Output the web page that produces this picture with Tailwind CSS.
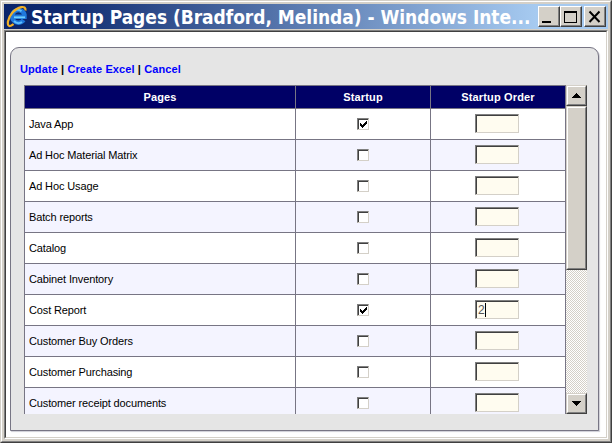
<!DOCTYPE html>
<html lang="en">
<head>
<meta charset="utf-8">
<title>Startup Pages (Bradford, Melinda)</title>
<script src="https://cdn.jsdelivr.net/npm/@tailwindcss/browser@4"></script>
</head>
<body class="w-[612px] h-[443px] overflow-hidden bg-[#d4d0c8] font-['Liberation_Sans',Arial,sans-serif] text-[11px] text-black">
<div class="w-[612px] h-[443px] border-l border-t border-[#d4d0c8] border-r border-b border-r-[#404040] border-b-[#404040]">
<div class="w-full h-full border border-white border-r-[#808080] border-b-[#808080] p-[2px] flex flex-col">
  <header class="h-[25px] shrink-0 flex items-center px-[2px] bg-[linear-gradient(90deg,#0a246a_0%,#0f2b70_9%,#a6caf0_88%)]">
    <svg class="w-[22px] h-[23px] shrink-0" viewBox="0 0 22 23">
      <path d="M17.600 15a6.300 6.300 0 1 1 .9-5.200v2H8" fill="none" stroke="#1f78dc" stroke-width="4.400"/>
      <path d="M6 8.500a6 6 0 0 1 9.500-2.300M8 16a6 6 0 0 0 8 1" fill="none" stroke="#5fc0ff" stroke-width="2"/>
      <path d="M8 12.300h11" stroke="#6fd0ff" stroke-width="1.800"/>
      <path d="M19.500 5.500c.8-6-8-3.500-13 2S.2 21.500 4 21c1.500-.2 2.500-1.200 3.500-2" fill="none" stroke="#f0b028" stroke-width="2.200"/>
    </svg>
    <h1 class="ml-[3px] pt-[2px] w-[501px] shrink-0 whitespace-nowrap text-white font-bold text-[19px] leading-[25px] font-['DejaVu_Sans_Condensed','DejaVu_Sans',Tahoma,sans-serif] [font-stretch:semi-condensed] tracking-[-0.04px]">Startup Pages (Bradford, Melinda) - Windows Inte...</h1>
    <div class="ml-auto flex shrink-0">
      <span class="w-[22px] h-[21px] border border-white border-r-[#404040] border-b-[#404040]"><svg class="w-[20px] h-[19px] block bg-[#d4d0c8] border-r border-b border-[#808080]" viewBox="0 0 19 18" shape-rendering="crispEdges"><path d="M3 14h9v2H3z"/></svg></span>
      <span class="w-[22px] h-[21px] border border-white border-r-[#404040] border-b-[#404040]"><svg class="w-[20px] h-[19px] block bg-[#d4d0c8] border-r border-b border-[#808080]" viewBox="0 0 19 18" shape-rendering="crispEdges"><path fill-rule="evenodd" d="M3 4h13v12H3zM4 6v9h11V6z"/></svg></span>
      <span class="ml-[2px] w-[22px] h-[21px] border border-white border-r-[#404040] border-b-[#404040]"><svg class="w-[20px] h-[19px] block bg-[#d4d0c8] border-r border-b border-[#808080]" viewBox="0 0 19 18"><path d="M4.500 4.500l10 10.500M14.500 4.500L4.500 15" stroke="#000" stroke-width="2"/></svg></span>
    </div>
  </header>
  <main class="mt-px grow min-h-0 border border-[#808080] border-r-white border-b-white">
    <div class="w-full h-full bg-white border border-[#404040] border-r-[#d4d0c8] border-b-[#d4d0c8] pt-[15px] pl-[4px]">
      <section class="w-[589px] h-[384px] bg-[#e5e5e5] border border-[#777584] rounded-t-[9px] shadow-[1px_1px_1px_#cfcfd6] pl-[9px] flex flex-col">
        <nav class="h-[37px] shrink-0 pt-[14px] leading-[15px] font-bold text-[11px] whitespace-nowrap tracking-[0.1px]"><a class="text-[#0000ff]">Update</a> | <a class="text-[#0000ff]">Create Excel</a> | <a class="text-[#0000ff]">Cancel</a></nav>
        <div class="ml-[4px] w-[563px] h-[329px] flex overflow-hidden">
          <div class="w-[542px] h-[329px] overflow-hidden shrink-0 border-l border-[#777584]">
            <div class="grid grid-cols-[271px_135px_135px] h-[24px] border-y border-[#777584] bg-[#000066] text-white font-bold text-center leading-[23px] tracking-[0.15px]">
              <div class="border-r border-[#777584]">Pages</div><div class="border-r border-[#777584]">Startup</div><div class="border-r border-[#777584]">Startup Order</div>
            </div>
            <div id="rows"></div>
          </div>
          <div class="w-[21px] h-[329px] shrink-0 flex flex-col bg-[repeating-conic-gradient(#d4d0c8_0_25%,#ffffff_0_50%)] bg-[length:2px_2px]">
            <span class="h-[21px] shrink-0 border border-[#d4d0c8] border-r-[#404040] border-b-[#404040]"><svg class="block w-[19px] h-[19px] bg-[#d4d0c8] border border-white border-r-[#808080] border-b-[#808080]" viewBox="0 0 17 17" shape-rendering="crispEdges"><path d="M8 6h1v1h1v1h1v1h1v1h1v1H4v-1h1V9h1V8h1V7h1z"/></svg></span>
            <span class="h-[164px] shrink-0 border border-[#d4d0c8] border-r-[#404040] border-b-[#404040]"><span class="block h-full bg-[#d4d0c8] border border-white border-r-[#808080] border-b-[#808080]"></span></span>
            <span class="mt-auto h-[21px] shrink-0 border border-[#d4d0c8] border-r-[#404040] border-b-[#404040]"><svg class="block w-[19px] h-[19px] bg-[#d4d0c8] border border-white border-r-[#808080] border-b-[#808080]" viewBox="0 0 17 17" shape-rendering="crispEdges"><path d="M4 6h9v1h-1v1h-1v1h-1v1H9v1H8v-1H7V9H6V8H5V7H4z"/></svg></span>
          </div>
        </div>
      </section>
    </div>
  </main>
</div>
</div>
<script>
const pages = [["Java App",1],["Ad Hoc Material Matrix",0],["Ad Hoc Usage",0],["Batch reports",0],["Catalog",0],["Cabinet Inventory",0],["Cost Report",1,"2"],["Customer Buy Orders",0],["Customer Purchasing",0],["Customer receipt documents",0]];
const tick = '<svg class="block w-[7px] h-[7px]" viewBox="0 0 7 7" shape-rendering="crispEdges"><path d="M0 2h1v1h1v1h1V3h1V2h1V1h1V0h1v3H6v1H5v1H4v1H3v1H2V6H1V5H0z"/></svg>';
document.getElementById("rows").innerHTML = pages.map((p, i) => `
<div class="grid grid-cols-[271px_135px_135px] h-[31px] border-b border-[#777584] ${i % 2 ? "bg-[#f4f4ff]" : "bg-white"}">
  <div class="border-r border-[#777584] pl-[4px] leading-[31px] whitespace-nowrap tracking-[-0.13px]">${p[0]}</div>
  <div class="border-r border-[#777584] pl-[61px] pt-[9px]"><span class="block w-[12px] h-[12px] border border-[#808080] border-r-[#d4d0c8] border-b-[#d4d0c8]"><span class="block w-[10px] h-[10px] bg-white border-l border-t border-[#404040] pl-px pt-px">${p[1] ? tick : ""}</span></span></div>
  <div class="border-r border-[#777584] pl-[44px] pt-[5px]"><span class="block w-[44px] h-[19px] border border-[#808080] border-r-[#d4d0c8] border-b-[#d4d0c8]"><span class="flex w-[42px] h-[17px] bg-[#fffcf0] border-l border-t border-[#404040] pl-px text-[12px] leading-[17px] text-[#555]">${p[2] ? p[2] + '<i class="w-px h-[14px] mt-px bg-black"></i>' : ""}</span></span></div>
</div>`).join("");
</script>
</body>
</html>
